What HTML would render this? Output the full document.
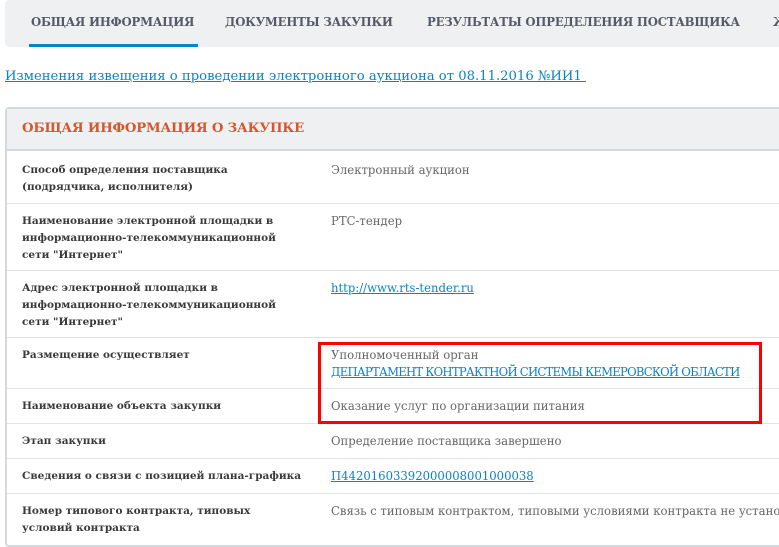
<!DOCTYPE html>
<html><head><meta charset="utf-8"><style>
*{margin:0;padding:0;box-sizing:border-box}
body{width:779px;height:546px;overflow:hidden;background:#fff;font-family:"DejaVu Serif","Liberation Serif",serif;position:relative}
.a{position:absolute;white-space:nowrap}
.tab{top:14px;font-size:11.7px;font-weight:bold;color:#555b66;letter-spacing:-0.2px;line-height:17px}
.lab{left:22px;font-size:10.5px;font-weight:bold;color:#3a3a3a;line-height:17px}
.val{left:331px;font-size:11.65px;color:#666;line-height:17px}
.lnk{color:#0a82c8;text-decoration:underline}
.hl{position:absolute;left:7px;width:772px;height:1px;background:#e0e2e5}
</style></head><body>
<div class="a" style="left:5px;top:0;width:790px;height:47px;background:#eef0f2;border-radius:4px"></div>
<div class="a tab" style="left:31px">ОБЩАЯ ИНФОРМАЦИЯ</div>
<div class="a" style="left:29px;top:44px;width:169px;height:3px;background:#0a82c8"></div>
<div class="a tab" style="left:225px">ДОКУМЕНТЫ ЗАКУПКИ</div>
<div class="a tab" style="left:427px">РЕЗУЛЬТАТЫ ОПРЕДЕЛЕНИЯ ПОСТАВЩИКА</div>
<div class="a tab" style="left:773px">Ж</div>
<div class="a lnk" style="left:5px;top:69px;font-size:13.2px;letter-spacing:0px">Изменения извещения о проведении электронного аукциона от 08.11.2016 №ИИ1&nbsp;</div>
<div class="a" style="left:5px;top:107px;width:800px;height:440px;border:2px solid #d5d8dc;border-radius:4px"></div>
<div class="a" style="left:7px;top:109px;width:790px;height:42px;background:#eef0f2;border-bottom:2px solid #d5d8dc"></div>
<div class="a" style="left:22px;top:121px;font-size:13.25px;font-weight:bold;color:#d4582c;letter-spacing:-0.2px">ОБЩАЯ ИНФОРМАЦИЯ О ЗАКУПКЕ</div>
<div class="hl" style="top:203px"></div><div class="hl" style="top:270px"></div><div class="hl" style="top:337px"></div><div class="hl" style="top:388px"></div><div class="hl" style="top:423px"></div><div class="hl" style="top:458px"></div><div class="hl" style="top:493px"></div>

<div class="a lab" style="top:162px">Способ определения поставщика<br>(подрядчика, исполнителя)</div>
<div class="a val" style="top:162px">Электронный аукцион</div>
<div class="a lab" style="top:213px">Наименование электронной площадки в<br>информационно-телекоммуникационной<br>сети "Интернет"</div>
<div class="a val" style="top:213px">РТС-тендер</div>
<div class="a lab" style="top:280px">Адрес электронной площадки в<br>информационно-телекоммуникационной<br>сети "Интернет"</div>
<div class="a val lnk" style="top:280px">http://www.rts-tender.ru</div>
<div class="a lab" style="top:347px">Размещение осуществляет</div>
<div class="a val" style="top:347px">Уполномоченный орган<br><span class="lnk" style="letter-spacing:-0.75px">ДЕПАРТАМЕНТ КОНТРАКТНОЙ СИСТЕМЫ КЕМЕРОВСКОЙ ОБЛАСТИ</span></div>
<div class="a lab" style="top:398px">Наименование объекта закупки</div>
<div class="a val" style="top:398px">Оказание услуг по организации питания</div>
<div class="a lab" style="top:433px">Этап закупки</div>
<div class="a val" style="top:433px">Определение поставщика завершено</div>
<div class="a lab" style="top:468px">Сведения о связи с позицией плана-графика</div>
<div class="a val lnk" style="top:468px">П44201603392000008001000038</div>
<div class="a lab" style="top:503px">Номер типового контракта, типовых<br>условий контракта</div>
<div class="a val" style="top:503px">Связь с типовым контрактом, типовыми условиями контракта не установлена</div>
<div class="a" style="left:318px;top:342px;width:444px;height:82px;border:3px solid #f00"></div>
</body></html>
